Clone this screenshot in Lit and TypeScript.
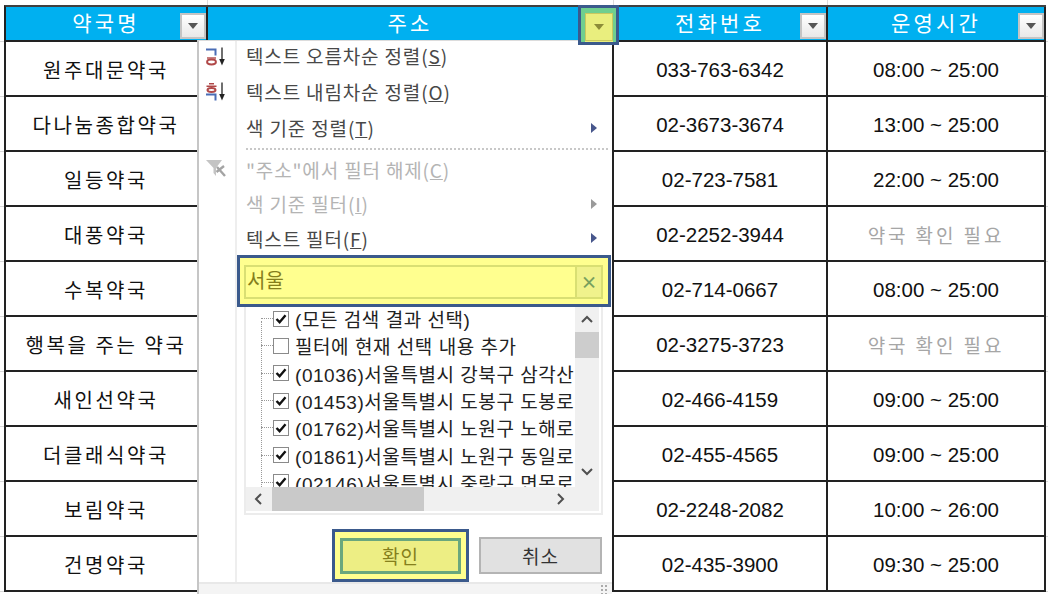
import { LitElement, html, css, svg } from "lit";
import { customElement } from "lit/decorators.js";

const rows = [
  ["원주대문약국", "033-763-6342", "08:00 ~ 25:00"],
  ["다나눔종합약국", "02-3673-3674", "13:00 ~ 25:00"],
  ["일등약국", "02-723-7581", "22:00 ~ 25:00"],
  ["대풍약국", "02-2252-3944", "약국 확인 필요"],
  ["수복약국", "02-714-0667", "08:00 ~ 25:00"],
  ["행복을 주는 약국", "02-3275-3723", "약국 확인 필요"],
  ["새인선약국", "02-466-4159", "09:00 ~ 25:00"],
  ["더클래식약국", "02-455-4565", "09:00 ~ 25:00"],
  ["보림약국", "02-2248-2082", "10:00 ~ 26:00"],
  ["건명약국", "02-435-3900", "09:30 ~ 25:00"],
];

const tree = [
  { t: "(모든 검색 결과 선택)", c: true },
  { t: "필터에 현재 선택 내용 추가", c: false },
  { t: "(01036)서울특별시 강북구 삼각산", c: true },
  { t: "(01453)서울특별시 도봉구 도봉로", c: true },
  { t: "(01762)서울특별시 노원구 노해로", c: true },
  { t: "(01861)서울특별시 노원구 동일로", c: true },
  { t: "(02146)서울특별시 중랑구 면목로", c: true },
];

const check = svg`<svg viewBox="0 0 14 14" width="14" height="14"><path d="M2.5 7 L5.6 10.2 L11.5 3.2" fill="none" stroke="#111" stroke-width="2.4"/></svg>`;
const arrowUp = svg`<svg viewBox="0 0 14 10" width="14" height="10"><path d="M2 8 L7 3 L12 8" fill="none" stroke="#505050" stroke-width="2"/></svg>`;
const arrowDown = svg`<svg viewBox="0 0 14 10" width="14" height="10"><path d="M2 2 L7 7 L12 2" fill="none" stroke="#505050" stroke-width="2"/></svg>`;
const arrowLeft = svg`<svg viewBox="0 0 10 14" width="10" height="14"><path d="M8 2 L3 7 L8 12" fill="none" stroke="#505050" stroke-width="2"/></svg>`;
const arrowRight = svg`<svg viewBox="0 0 10 14" width="10" height="14"><path d="M2 2 L7 7 L2 12" fill="none" stroke="#505050" stroke-width="2"/></svg>`;

const sortAsc = svg`<svg viewBox="0 0 24 24" width="24" height="24">
  <path d="M2 5.5 H11.5 V11.5" fill="none" stroke="#4a6db5" stroke-width="2"/>
  <path d="M3 14 H12" stroke="#b04848" stroke-width="1.4"/>
  <ellipse cx="7.5" cy="18" rx="4.4" ry="2.4" fill="none" stroke="#b04848" stroke-width="2"/>
  <path d="M18 3.5 V19" stroke="#222" stroke-width="1.3"/><path d="M15.2 15 L18 21.5 L20.8 15Z" fill="#222"/></svg>`;
const sortDesc = svg`<svg viewBox="0 0 24 24" width="24" height="24">
  <path d="M5 3.8 H10 M2.5 6.2 H12.5" stroke="#b04848" stroke-width="1.4"/>
  <ellipse cx="7.5" cy="10" rx="4" ry="2" fill="none" stroke="#b04848" stroke-width="2"/>
  <path d="M2 14.5 H11.5 V20.5" fill="none" stroke="#4a6db5" stroke-width="2"/>
  <path d="M18 2.5 V18" stroke="#222" stroke-width="1.3"/><path d="M15.2 14 L18 20.5 L20.8 14Z" fill="#222"/></svg>`;
const clearFilter = svg`<svg viewBox="0 0 24 24" width="24" height="24">
  <path d="M2 3 H18 L12 11 V19 L9.5 16 V11Z" fill="#c4c4c4"/>
  <path d="M13 10 L21 19 M20 9 L12.5 15" stroke="#a4a4a4" stroke-width="2.4"/></svg>`;

function label(text: string, key: string) {
  return html`${text}(<u>${key}</u>)`;
}

@customElement("app-root")
export class AppRoot extends LitElement {
  static styles = css`
    :host {
      display: block;
      width: 1048px;
      height: 594px;
      overflow: hidden;
      position: relative;
      font-family: "Noto Sans CJK KR", "Liberation Sans", sans-serif;
      background-color: #fff;
      background-image: linear-gradient(#d8d8d8 1px, transparent 1px),
        linear-gradient(#dcdcdc, #dcdcdc), linear-gradient(#dcdcdc, #dcdcdc),
        linear-gradient(#dcdcdc, #dcdcdc);
      background-size: 100% 55px, 1px 5px, 1px 5px, 1px 5px;
      background-position: 0 41px, 207px 0, 613px 0, 827px 0;
      background-repeat: repeat-y, no-repeat, no-repeat, no-repeat;
    }
    .table {
      margin: 5px 0 0 4px;
      display: grid;
      grid-template-columns: 202px 406px 214px 218px;
      grid-template-rows: 35px;
      grid-auto-rows: 55px;
      width: 1042px;
      border-top: 2px solid #404040;
      border-left: 2px solid #222;
      box-sizing: border-box;
    }
    .cell {
      border-right: 2px solid #222;
      border-bottom: 2px solid #222;
      box-sizing: border-box;
      display: flex;
      align-items: center;
      justify-content: center;
      background: #fff;
      color: #111;
      font-size: 20px;
      letter-spacing: 2.6px;
      padding-top: 2px;
    }
    .head {
      background: #00b0f0;
      color: #fff;
      position: relative;
      font-size: 21px;
      letter-spacing: 3.2px;
      padding: 0 0 3px 0;
    }
    .num {
      font-family: "Liberation Sans", sans-serif;
      font-size: 20.5px;
      letter-spacing: 0;
    }
    .muted {
      color: #a6a6a6;
      font-family: "Noto Sans CJK KR", sans-serif;
      font-size: 19px;
      letter-spacing: 2.9px;
    }
    .dd {
      position: absolute;
      right: 0;
      top: 6px;
      width: 26px;
      height: 26px;
      box-sizing: border-box;
      border: 2px solid #c4c4c4;
      background: linear-gradient(#ffffff, #e8e8e8);
      display: flex;
      align-items: center;
      justify-content: center;
    }
    .dd::after {
      content: "";
      border: 5px solid transparent;
      border-top: 6px solid #555;
      border-bottom: 0;
    }
    .dd.hot {
      top: -2px;
      right: -7px;
      width: 41px;
      height: 40px;
      padding-top: 4px;
      background: linear-gradient(90deg, #6fcf8f 4px, transparent 4px),
        linear-gradient(270deg, #6fcf8f 3px, transparent 3px),
        linear-gradient(#6fcf8f 5px, #e9ee7e 5px);
      border: 3px solid #3b5a8c;
      z-index: 2;
    }
    .dd.hot::before {
      content: "";
      position: absolute;
      left: 4px;
      right: 3px;
      top: 5px;
      bottom: 1px;
      border: 1px solid #c8c860;
    }
    .dd.hot::after {
      border-top-color: #8c8c38;
    }
    .menu {
      position: absolute;
      left: 197px;
      top: 40px;
      width: 415px;
      height: 554px;
      background: #fff;
      border-left: 2px solid #c6c6c6;
      border-top: 1px solid #dcdcdc;
      box-sizing: border-box;
      display: flex;
      flex-direction: column;
      color: #444;
      font-size: 19px;
      z-index: 1;
    }
    .gutter {
      position: absolute;
      left: 36px;
      top: 0;
      bottom: 12px;
      width: 2px;
      background: #eeeeee;
    }
    .items {
      display: flex;
      flex-direction: column;
      margin-top: -3.5px;
    }
    .item {
      height: 36px;
      flex: none;
      display: flex;
      align-items: center;
      padding-left: 47px;
      padding-right: 15px;
      position: relative;
      color: #484848;
      letter-spacing: 0.85px;
      white-space: nowrap;
    }
    .item.low {
      height: 34.5px;
    }
    .item .ico {
      position: absolute;
      left: 5px;
      top: 6px;
      line-height: 0;
    }
    .item.low .ico {
      top: 5px;
    }
    .item .more {
      margin-left: auto;
      border: 5px solid transparent;
      border-left: 6px solid #47578c;
      border-right: 0;
    }
    .item.off {
      color: #b4b4b4;
    }
    .item.off .more {
      border-left-color: #9a9a9a;
    }
    .sep {
      height: 0;
      border-top: 2px dotted #c8c8c8;
      margin: 2.5px 4px 2px 47px;
    }
    .search-hl {
      margin: -1px 0 0 38px;
      width: 374px;
      height: 52px;
      flex: none;
      box-sizing: border-box;
      border: 3px solid #3b5a8c;
      background: #ffff8f;
      padding: 7px 5px 5px 4px;
    }
    .search {
      height: 34px;
      box-sizing: border-box;
      border: 2px solid #d9df73;
      display: flex;
      color: #857f1c;
      font-size: 20px;
    }
    .search span {
      flex: 1;
      padding-left: 1px;
      line-height: 26px;
    }
    .search b {
      width: 26px;
      box-sizing: border-box;
      border-left: 2px solid #d9df73;
      background: #f0f28c;
      color: #77a05e;
      font-weight: 700;
      font-size: 17px;
      display: flex;
      align-items: center;
      justify-content: center;
    }
    .list {
      margin-left: 45px;
      width: 359px;
      height: 208px;
      flex: none;
      box-sizing: border-box;
      border: 2px solid #ececec;
      border-top: 0;
      padding-right: 2px;
      padding-bottom: 2px;
      display: grid;
      grid-template-columns: 1fr 24px;
      grid-template-rows: 180px 24px;
      background: #fff;
    }
    .tree {
      overflow: hidden;
      background: #fff;
      color: #222;
      position: relative;
    }
    .node {
      height: 27.3px;
      display: flex;
      align-items: center;
      font-size: 19px;
      white-space: nowrap;
      position: relative;
      top: -1.5px;
      padding-left: 15px;
      letter-spacing: 0.55px;
    }
    .node::before {
      content: "";
      width: 12px;
      border-top: 1px dotted #999;
    }
    .vline {
      position: absolute;
      left: 15px;
      top: 14px;
      bottom: 0;
      border-left: 1px dotted #999;
    }
    .box {
      width: 16px;
      height: 16px;
      box-sizing: border-box;
      border: 1.5px solid #8a8a8a;
      background: #fff;
      line-height: 0;
      flex: none;
      display: flex;
      align-items: center;
      justify-content: center;
      margin-right: 6px;
    }
    .txt {
      font-family: "Liberation Sans", "Noto Sans CJK KR", sans-serif;
    }
    .vbar {
      background: #f0f0f0;
      display: flex;
      flex-direction: column;
      align-items: center;
      justify-content: space-between;
      padding: 7px 0 10px;
      position: relative;
    }
    .vthumb {
      position: absolute;
      left: 0;
      right: 0;
      top: 25px;
      height: 26px;
      background: #cdcdcd;
    }
    .hbar {
      background: #f0f0f0;
      display: flex;
      align-items: center;
      justify-content: space-between;
      padding: 0 33px 0 7px;
      position: relative;
      grid-column: 1 / span 2;
    }
    .hthumb {
      position: absolute;
      top: 0;
      bottom: 0;
      left: 26px;
      width: 152px;
      background: #c9c9c9;
    }
    .btns {
      display: flex;
      margin: 14px 0 0 133px;
      gap: 10px;
      align-items: center;
    }
    .ok-hl {
      width: 137px;
      height: 53px;
      box-sizing: border-box;
      border: 3px solid #3b5a8c;
      background: #ffff8f;
      padding: 6px 5px 5px;
    }
    .ok {
      height: 100%;
      box-sizing: border-box;
      border: 3px solid #6aa77d;
      background: #edee84;
      color: #857f1c;
      display: flex;
      align-items: center;
      justify-content: center;
      font-size: 19px;
      letter-spacing: 1px;
    }
    .cancel {
      width: 123px;
      height: 37px;
      box-sizing: border-box;
      border: 2px solid #b4b4b4;
      background: #e1e1e1;
      color: #333;
      display: flex;
      align-items: center;
      justify-content: center;
      font-size: 19px;
      letter-spacing: 1px;
    }
    .foot {
      position: absolute;
      left: 0;
      right: 0;
      bottom: 0;
      height: 12px;
      box-sizing: border-box;
      background: #f4f4f4;
      border-top: 2px solid #e8e8e8;
    }
    .grip {
      position: absolute;
      right: 4px;
      bottom: 0;
      width: 8px;
      height: 10px;
      background-image: radial-gradient(#aaa 1px, transparent 1.2px);
      background-size: 4px 4px;
    }
  `;

  render() {
    return html`
      <div class="table">
        <div class="cell head">약국명<i class="dd"></i></div>
        <div class="cell head">주소<i class="dd hot"></i></div>
        <div class="cell head">전화번호<i class="dd"></i></div>
        <div class="cell head">운영시간<i class="dd"></i></div>
        ${rows.map(
          (r) => html`
            <div class="cell">${r[0]}</div>
            <div class="cell"></div>
            <div class="cell num">${r[1]}</div>
            <div class="cell ${r[2].startsWith("약") ? "muted" : "num"}">${r[2]}</div>
          `
        )}
      </div>
      <div class="menu">
        <div class="gutter"></div>
        <div class="items">
          <div class="item"><span class="ico">${sortAsc}</span>${label("텍스트 오름차순 정렬", "S")}</div>
          <div class="item"><span class="ico">${sortDesc}</span>${label("텍스트 내림차순 정렬", "O")}</div>
          <div class="item">${label("색 기준 정렬", "T")}<i class="more"></i></div>
          <div class="sep"></div>
          <div class="item low off"><span class="ico">${clearFilter}</span>${label('"주소"에서 필터 해제', "C")}</div>
          <div class="item low off">${label("색 기준 필터", "I")}<i class="more"></i></div>
          <div class="item low">${label("텍스트 필터", "F")}<i class="more"></i></div>
        </div>
        <div class="search-hl">
          <div class="search"><span>서울</span><b>×</b></div>
        </div>
        <div class="list">
          <div class="tree">
            <div class="vline"></div>
            ${tree.map(
              (n) => html`<div class="node">
                <span class="box">${n.c ? check : ""}</span><span class="txt">${n.t}</span>
              </div>`
            )}
          </div>
          <div class="vbar"><div class="vthumb"></div>${arrowUp}${arrowDown}</div>
          <div class="hbar"><div class="hthumb"></div>${arrowLeft}${arrowRight}</div>
        </div>
        <div class="btns">
          <div class="ok-hl"><div class="ok">확인</div></div>
          <div class="cancel">취소</div>
        </div>
        <div class="foot"><div class="grip"></div></div>
      </div>
    `;
  }
}
